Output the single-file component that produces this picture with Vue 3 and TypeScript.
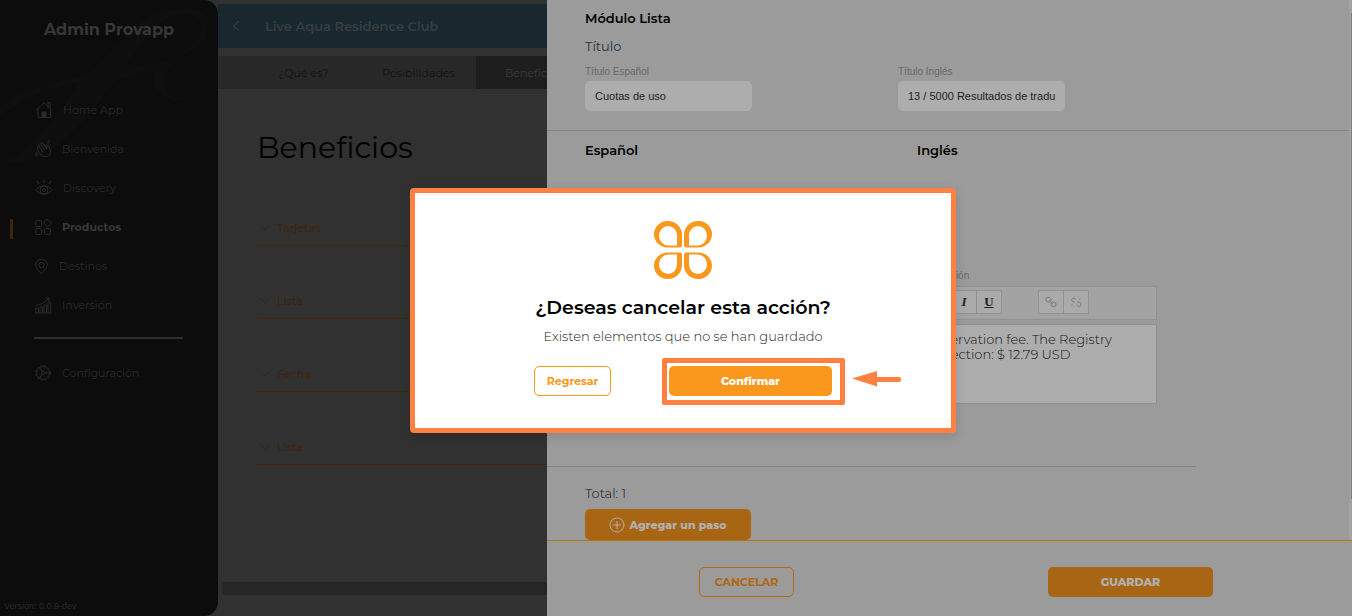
<script setup lang="ts">
import { ref } from 'vue'

interface NavItem {
  label: string
  icon: string
  width: number
  active?: boolean
}

const navItems: NavItem[] = [
  { label: 'Home App', icon: 'home', width: 18 },
  { label: 'Bienvenida', icon: 'hands', width: 17 },
  { label: 'Discovery', icon: 'eye', width: 18 },
  { label: 'Productos', icon: 'grid', width: 17, active: true },
  { label: 'Destinos', icon: 'pin', width: 14 },
  { label: 'Inversión', icon: 'chart', width: 17 },
]

const tabs = ['¿Qué es?', 'Posibilidades', 'Beneficios']
const activeTab = ref('Beneficios')
const sections = ['Tarjetas', 'Lista', 'Fecha', 'Lista']

const titleEs = ref('Cuotas de uso')
const titleEn = ref('13 / 5000 Resultados de tradu')
const description = ref('Reservation fee. The Registry Collection: $ 12.79 USD')
</script>

<template>
  <div class="shell">
    <aside class="sidebar">
      <svg class="flourish" viewBox="0 0 218 170" aria-hidden="true">
        <path d="M0 107C20 88 60 80 88 75C112 52 130 22 160 12C185 4 212 8 209 28C206 44 190 54 176 54C192 48 204 36 200 22C194 8 166 14 150 32C138 48 130 60 124 70C140 66 150 62 160 62C172 62 178 66 172 68C160 72 162 96 178 98C184 98 188 92 188 88C190 94 186 100 178 100C160 100 148 86 154 72C140 76 130 78 116 80C90 114 60 156 22 162C12 163 4 163 0 162C30 154 56 116 80 82C50 88 20 98 0 118Z" />
      </svg>
      <h1 class="brand">Admin Provapp</h1>
      <nav class="nav">
        <a v-for="item in navItems" :key="item.label" href="#" class="nav-link" :class="{ active: item.active }">
          <svg class="nav-icon" :width="item.width" height="18" :viewBox="`0 0 ${item.width} 18`" aria-hidden="true">
            <g v-if="item.icon === 'home'">
              <path d="M1 9.500L9 1.500L17 9.500M3 8V16.500H15.500V8M13 5V1.500H15V7" />
              <path class="solid" d="M7 11H11V16.500H7Z" />
            </g>
            <g v-else-if="item.icon === 'hands'">
              <path d="M3 11L2.500 6.500Q3 5.500 4 6.500L6 3Q7 2 8 3L12 8L11.500 5Q12.500 4 13.500 6L15.500 11Q16 15 12 16.500Q8 17.500 5 14ZM4 7L8 12M6 5L10 10M8 4L12 9" />
              <path d="M12 2L14 3.500M13 .5L15.500 2M1 12L3.500 15M.5 14L2 16.500" />
            </g>
            <g v-else-if="item.icon === 'eye'">
              <path d="M.7 11Q9 2 17.300 11Q9 20 .7 11Z" />
              <circle cx="9" cy="11" r="4" />
              <circle cx="9" cy="11" r="1.500" />
              <path d="M9 1V4M2 2L4 5M16 2L14 5" />
            </g>
            <g v-else-if="item.icon === 'grid'">
              <rect x=".7" y="2.500" width="6" height="6" rx="1.200" />
              <rect x=".7" y="10.500" width="6" height="6" rx="1.200" />
              <rect x="9.500" y="10.500" width="6" height="6" rx="1.200" />
              <path d="M12.500 1L16.500 5L12.500 9L8.500 5Z" />
            </g>
            <g v-else-if="item.icon === 'pin'">
              <path d="M6.500 17Q.7 11.500 .7 8A5.800 5.800 0 0 1 12.300 8Q12.300 11.500 6.500 17Z" />
              <circle cx="6.500" cy="8" r="2.700" />
            </g>
            <g v-else>
              <path d="M.7 17V12H3.500V17M5 17V11H7.500V17M9 17V9H11.500V17M13 17V6H15.700V17M0 17H16.500M.5 9.500Q8 9 13.500 2.500M11 2H14V5" />
            </g>
          </svg>
          <span>{{ item.label }}</span>
        </a>
      </nav>
      <hr class="nav-rule" />
      <nav class="nav">
        <a href="#" class="nav-link">
          <svg class="nav-icon" width="17" height="18" viewBox="0 0 17 18" aria-hidden="true">
            <circle cx="8" cy="9" r="6.300" />
            <circle class="teeth" cx="8" cy="9" r="7.400" />
            <circle cx="8" cy="9" r="1.500" />
            <path d="M9.500 9H14.500M7.200 7.700L4.600 3.500M7.200 10.300L4.600 14.500" />
          </svg>
          <span>Configuración</span>
        </a>
      </nav>
      <p class="version">Versión: 0.0.9-dev</p>
    </aside>

    <main class="page">
      <header class="topbar">
        <button type="button" class="back" aria-label="Volver">
          <svg width="8" height="12" viewBox="0 0 8 12" aria-hidden="true"><path d="M7 1L1.500 6L7 11" /></svg>
        </button>
        <h2>Live Aqua Residence Club</h2>
      </header>
      <div class="tabs">
        <button
          v-for="tab in tabs"
          :key="tab"
          type="button"
          class="tab"
          :class="{ selected: tab === activeTab }"
          @click="activeTab = tab"
        >{{ tab }}</button>
      </div>
      <div class="content">
        <h2 class="page-title">Beneficios</h2>
        <button v-for="(section, i) in sections" :key="i" type="button" class="section">
          <svg width="12" height="8" viewBox="0 0 12 8" aria-hidden="true"><path d="M1 1L6 6L11 1" /></svg>
          <span>{{ section }}</span>
        </button>
      </div>
      <div class="page-scroll"></div>
    </main>

    <section class="drawer">
      <div class="drawer-scroll">
        <div class="drawer-body">
          <div class="block titles">
            <h3>Módulo Lista</h3>
            <h4>Título</h4>
            <div class="fields">
              <div class="field">
                <label for="title-es">Título Español</label>
                <input id="title-es" v-model="titleEs" type="text" />
              </div>
              <div class="field">
                <label for="title-en">Título Inglés</label>
                <input id="title-en" v-model="titleEn" type="text" />
              </div>
            </div>
          </div>
          <div class="block languages">
            <h3>Español</h3>
            <div class="english">
              <h3>Inglés</h3>
              <label for="description-en">Descripción</label>
              <div class="toolbar">
                <button type="button" class="tool"><b>B</b></button>
                <button type="button" class="tool"><i>I</i></button>
                <button type="button" class="tool"><u>U</u></button>
                <button type="button" class="tool link" disabled aria-label="Enlazar">
                  <svg width="12" height="12" viewBox="0 0 12 12" aria-hidden="true">
                    <rect x="1" y="1.500" width="5" height="4.500" rx="2" /><rect x="6" y="6" width="5" height="4.500" rx="2" /><path d="M4 4L8 8" />
                  </svg>
                </button>
                <button type="button" class="tool" disabled aria-label="Quitar enlace">
                  <svg width="12" height="12" viewBox="0 0 12 12" aria-hidden="true">
                    <path d="M5 6H3Q1 5 2 3Q4 1 6 3.500M7 6L10 6.500Q12 8 10.500 10Q8 11.500 6.500 9" />
                    <path class="sparks" d="M8 2L9 .5M9 3.500L11 2.500M1 9L3 8M3.500 11L4.500 9.500M4 0V1" />
                  </svg>
                </button>
              </div>
              <textarea id="description-en" v-model="description"></textarea>
            </div>
          </div>
          <hr class="list-rule" />
          <div class="block totals">
            <p>Total: 1</p>
            <button type="button" class="solid-button add">
              <svg width="16" height="16" viewBox="0 0 16 16" aria-hidden="true">
                <circle cx="8" cy="8" r="7" /><path d="M8 4V12M4 8H12" />
              </svg>
              <span>Agregar un paso</span>
            </button>
          </div>
        </div>
        <div class="track"><div class="thumb"></div></div>
      </div>
      <footer class="drawer-footer">
        <button type="button" class="outline-button cancel">CANCELAR</button>
        <button type="button" class="solid-button save">GUARDAR</button>
      </footer>
    </section>

    <div class="overlay">
      <div class="dialog" role="dialog" aria-labelledby="dialog-title">
        <svg class="logo" width="58" height="58" viewBox="0 0 58 58" aria-hidden="true">
          <defs>
            <path id="petal" fill-rule="evenodd" d="M14 0A14 14 0 0 1 28 14V24.500Q28 26.500 26 26.500H14A13.500 13.250 0 0 1 0 13.250A13.500 13.250 0 0 1 14 0ZM14 5A9 9.500 0 0 1 23 14.500V24.500H14.500A9.500 9.500 0 0 1 5 14.500A9.500 9.500 0 0 1 14 5Z" />
          </defs>
          <use href="#petal" />
          <use href="#petal" transform="matrix(-1 0 0 1 58 0)" />
          <use href="#petal" transform="matrix(1 0 0 -1 0 58)" />
          <use href="#petal" transform="matrix(-1 0 0 -1 58 58)" />
        </svg>
        <h2 id="dialog-title">¿Deseas cancelar esta acción?</h2>
        <p>Existen elementos que no se han guardado</p>
        <div class="actions">
          <button type="button" class="outline-button back-action">Regresar</button>
          <div class="confirm">
            <button type="button" class="solid-button">Confirmar</button>
            <span class="marker"></span>
            <svg class="arrow" width="49" height="16" viewBox="0 0 49 16" aria-hidden="true">
              <path d="M0 7.500L25 0V15.500Z" /><rect x="22" y="6" width="27" height="5" rx="2" />
            </svg>
          </div>
        </div>
      </div>
    </div>
  </div>
</template>

<style>
body {
  margin: 0;
  background: #313131;
}
</style>

<style scoped>
* {
  box-sizing: border-box;
}

.shell {
  position: relative;
  display: flex;
  min-height: 100vh;
  overflow: hidden;
  background: #313131;
  font-family: Montserrat, Inter, sans-serif;
  font-size: 13px;
}

h1, h2, h3, h4, p {
  margin: 0;
}

button {
  padding: 0;
  border: 0;
  background: none;
  font-family: inherit;
  cursor: pointer;
}

svg {
  flex: none;
  fill: none;
}

.sidebar {
  position: relative;
  display: flex;
  flex-direction: column;
  flex: none;
  width: 218px;
  border-radius: 0 14px 14px 0;
  background: #0c0c0c;
  color: #2a2a2a;
}

.flourish {
  position: absolute;
  top: 0;
  left: 0;
  width: 100%;
  fill: #0e0e0e;
}

.brand {
  position: relative;
  margin-bottom: 50px;
  padding-top: 20px;
  color: #373737;
  font-size: 16px;
  font-weight: 700;
  line-height: 20px;
  text-align: center;
}

.nav {
  position: relative;
}

.nav-link {
  display: flex;
  align-items: center;
  gap: 10px;
  height: 39px;
  padding-left: 35px;
  color: inherit;
  font-size: 11px;
  text-decoration: none;
}

.nav-link.active {
  position: relative;
  color: #383838;
  font-weight: 700;
}

.nav-link.active::before {
  content: '';
  position: absolute;
  top: 12px;
  left: 10px;
  width: 3px;
  height: 20px;
  background: #3f240a;
}

.nav-icon {
  stroke: #2b2b2b;
}

.nav-icon .solid {
  fill: #2b2b2b;
}

.nav-icon .teeth {
  stroke-dasharray: 2 2;
}

.nav-rule {
  width: 149px;
  height: 2px;
  margin: 13px 0 14px 34px;
  border: 0;
  background: #303030;
}

.version {
  margin-top: auto;
  padding: 0 4px 4px;
  font-family: "Liberation Sans", sans-serif;
  font-size: 9px;
  line-height: 12px;
}

.page {
  display: flex;
  flex-direction: column;
  flex: 1;
  padding-top: 4px;
}

.topbar {
  display: flex;
  align-items: center;
  gap: 25px;
  height: 44px;
  padding-left: 14px;
  background: #19272e;
}

.topbar h2 {
  color: #373d40;
  font-size: 13px;
  font-weight: 600;
}

.back {
  display: flex;
  stroke: #3b4448;
}

.tabs {
  display: flex;
  height: 33px;
  margin-top: 8px;
  padding-left: 28px;
  background: #282828;
}

.tab {
  width: 115px;
  color: #131313;
  font-size: 11px;
  font-weight: 400;
}

.tab.selected {
  background: #1e1e1e;
  color: #3a3a3a;
}

.content {
  padding: 39px 0 0 39px;
}

.page-title {
  margin-bottom: 43px;
  color: #000;
  font-size: 30px;
  font-weight: 400;
  line-height: 40px;
}

.section {
  display: flex;
  align-items: center;
  gap: 6px;
  width: 100%;
  height: 35px;
  margin-bottom: 38px;
  padding-left: 2px;
  border-bottom: 1px solid #44270d;
  color: #3d2410;
  font-size: 11px;
  font-weight: 500;
}

.section svg {
  stroke: #3d2410;
}

.page-scroll {
  height: 13px;
  margin: auto 0 21px 4px;
  background: #262626;
}

.drawer {
  position: absolute;
  inset: 0 0 0 547px;
  display: flex;
  flex-direction: column;
  background: #9b9b9b;
  color: #000;
}

.drawer-scroll {
  display: flex;
  flex: 1;
}

.drawer-body {
  flex: 1;
}

.block {
  padding: 0 38px;
}

.drawer h3 {
  font-size: 13px;
  font-weight: 600;
  line-height: 16px;
}

.drawer h4 {
  margin: 12px 0;
  color: #243340;
  font-size: 13px;
  font-weight: 400;
  line-height: 16px;
}

.drawer label {
  display: block;
  color: #686868;
  font-family: "Liberation Sans", sans-serif;
  font-size: 10px;
  line-height: 12px;
}

.titles {
  padding-top: 10px;
  padding-bottom: 19px;
  border-bottom: 1px solid #858585;
}

.fields {
  display: flex;
  gap: 146px;
}

.field {
  width: 167px;
}

.field input {
  display: block;
  width: 100%;
  height: 30px;
  margin-top: 3px;
  padding: 0 10px;
  border: 0;
  border-radius: 5px;
  background: #adadad;
  color: #222;
  font-family: "Liberation Sans", sans-serif;
  font-size: 11px;
}

.languages {
  display: flex;
  padding-top: 11px;
}

.languages > h3 {
  width: 332px;
}

.english {
  width: 240px;
}

.english label {
  margin: 112px 0 4px;
}

.toolbar {
  display: flex;
  height: 34px;
  padding: 3px 8px;
  border: 1px solid #919191;
  background: #a3a3a3;
}

.tool {
  display: flex;
  align-items: center;
  justify-content: center;
  width: 26px;
  height: 24px;
  margin-right: -1px;
  border: 1px solid #919191;
  background: #aaa;
  color: #222;
  font-family: "Liberation Serif", serif;
  font-size: 13px;
  font-weight: 700;
}

.tool svg {
  stroke: #7d7d7d;
}

.tool .sparks {
  stroke: #929292;
}

.tool.link {
  margin-left: 37px;
}

textarea {
  display: block;
  width: 100%;
  height: 80px;
  margin-top: 4px;
  padding: 7px 9px;
  border: 1px solid #919191;
  background: #adadad;
  color: #111;
  font-family: inherit;
  font-size: 13px;
  font-weight: 300;
  line-height: 15px;
  resize: none;
}

.list-rule {
  width: 649px;
  height: 1px;
  margin: 62px 0 18px;
  border: 0;
  background: #858585;
}

.totals p {
  margin-bottom: 8px;
  color: #111;
  font-weight: 300;
  line-height: 16px;
}

.solid-button {
  border-radius: 5px;
  background: #a86614;
  color: #b0b0b0;
  font-size: 11px;
  font-weight: 800;
}

.outline-button {
  border: 1px solid #b56a10;
  border-radius: 5px;
  color: #b0670f;
  font-size: 11px;
  font-weight: 700;
}

.add {
  display: flex;
  align-items: center;
  justify-content: center;
  gap: 4px;
  width: 166px;
  height: 31px;
}

.add svg {
  stroke: #b0b0b0;
}

.track {
  width: 3px;
  padding: 13px 0 41px 2px;
  background: #a2a2a2;
}

.thumb {
  height: 100%;
  background: #7e7e7e;
}

.drawer-footer {
  display: flex;
  justify-content: space-between;
  padding: 26px 139px 19px 152px;
  border-top: 1px solid #ad7a0e;
}

.cancel {
  width: 95px;
  height: 30px;
}

.save {
  width: 165px;
  height: 30px;
}

.overlay {
  position: absolute;
  inset: 0;
  display: flex;
  align-items: center;
  justify-content: center;
  padding: 5px 0 0 14px;
}

.dialog {
  display: flex;
  flex-direction: column;
  align-items: center;
  width: 546px;
  padding: 28px 0 32px;
  border: 5px solid #ff8142;
  border-radius: 4px;
  background: #fff;
  box-shadow: 0 4px 12px rgba(0, 0, 0, 0.12);
}

.logo {
  fill: #f9981d;
}

.dialog h2 {
  margin-top: 17px;
  color: #000;
  font-size: 19px;
  font-weight: 600;
  line-height: 24px;
}

.dialog p {
  margin: 8px 0 22px;
  color: #222;
  font-size: 13px;
  font-weight: 300;
  line-height: 16px;
}

.actions {
  display: flex;
  justify-content: space-between;
  width: 298px;
}

.back-action {
  width: 77px;
  height: 30px;
  border-color: #f9981d;
  color: #f9981d;
}

.confirm {
  position: relative;
  width: 163px;
}

.confirm button {
  width: 100%;
  height: 30px;
  background: #f9981d;
  color: #fff;
}

.marker {
  position: absolute;
  inset: -8px -13px -9px -7px;
  border: 5px solid #ff8142;
  border-radius: 2px;
  pointer-events: none;
}

.arrow {
  position: absolute;
  top: 5px;
  left: 183px;
  fill: #ff8142;
}
</style>
